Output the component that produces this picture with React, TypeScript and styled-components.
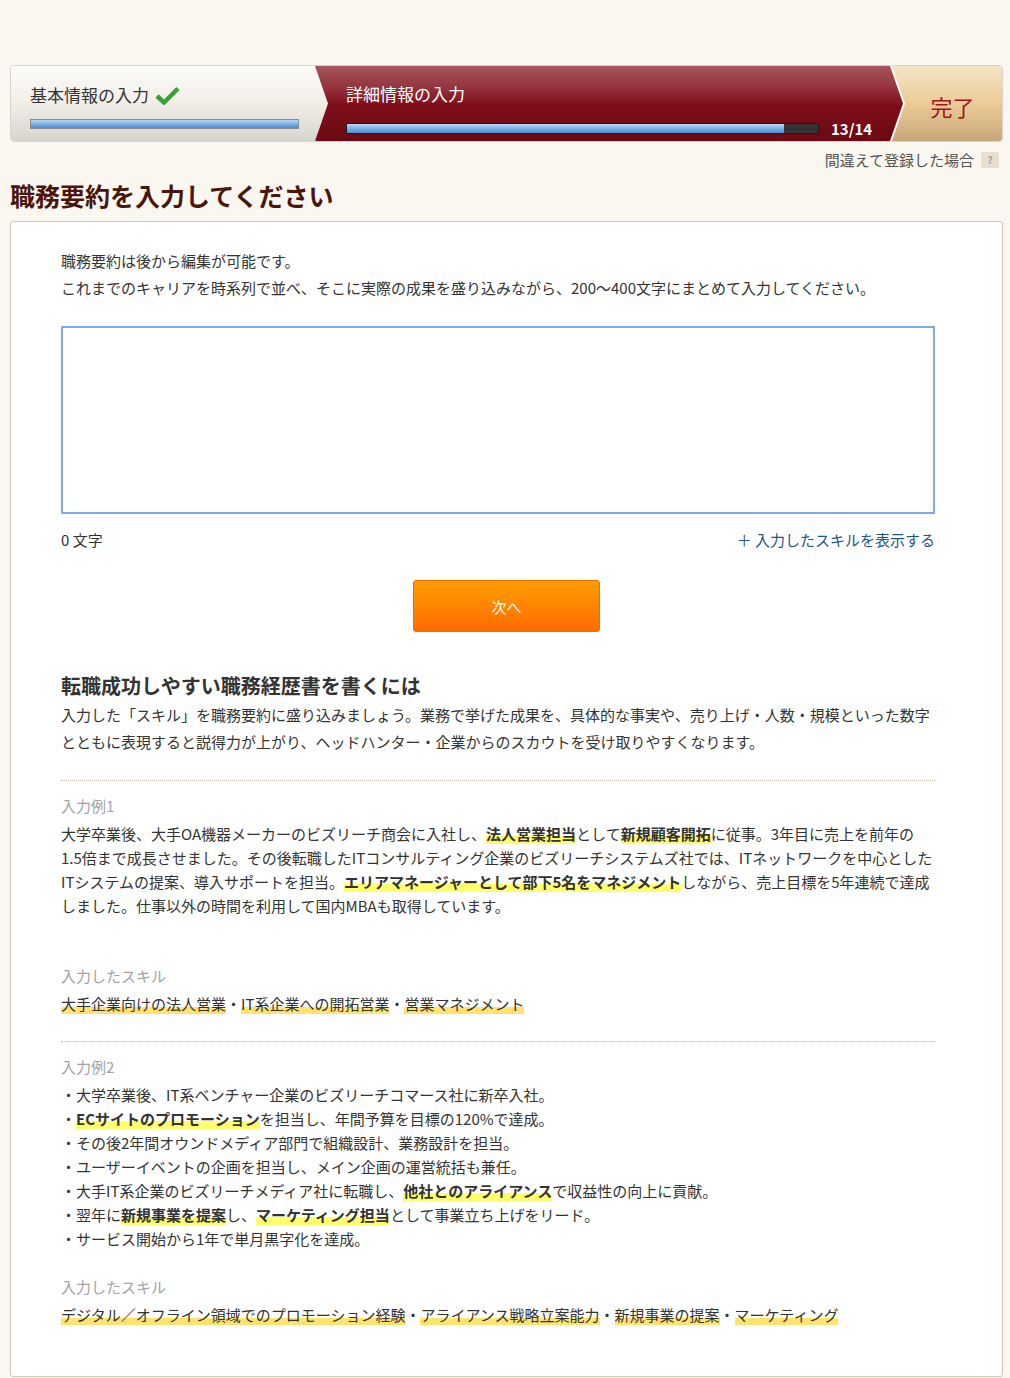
import React from "react";
import styled, { createGlobalStyle } from "styled-components";

const GlobalStyle = createGlobalStyle`
  html, body {
    margin: 0;
    padding: 0;
    background: #faf7f0;
  }
  body {
    font-family: "Noto Sans CJK JP", "Noto Sans", sans-serif;
    color: #333;
  }
  * {
    box-sizing: border-box;
  }
`;

const Page = styled.div`
  width: 993px;
  margin-left: 10px;
  padding-top: 65px;
`;

// ---- stepper ----
const Stepper = styled.div`
  display: flex;
  height: 77px;
  border: 1px solid #d9d3c9;
  border-radius: 4px;
  background: #fff;
  overflow: hidden;
`;

const StepDone = styled.div`
  flex: 0 0 317px;
  display: flex;
  flex-direction: column;
  padding: 17px 0 0 19px;
  background: linear-gradient(#fcfbf8 0%, #f3f0ea 45%, #d8d4ce 100%);
  clip-path: polygon(0 0, calc(100% - 13px) 0, 100% 50%, calc(100% - 13px) 100%, 0 100%);
`;

const StepCurrent = styled.div`
  flex: 0 0 590px;
  margin-left: -15px;
  display: flex;
  flex-direction: column;
  padding: 16px 0 0 33px;
  background: linear-gradient(#a6555d 0%, #93323c 30%, #7e0d19 52%, #6b0a14 100%);
  clip-path: polygon(2px 0, calc(100% - 13px) 0, 100% 50%, calc(100% - 13px) 100%, 2px 100%, 15px 50%);
`;

const StepFinal = styled.div`
  flex: 1;
  margin-left: -13px;
  display: flex;
  align-items: center;
  justify-content: center;
  padding-left: 13px;
  background: linear-gradient(#f5e4c6 0%, #eccb98 50%, #c8a679 100%);
  clip-path: polygon(2px 0, 100% 0, 100% 100%, 2px 100%, 15px 50%);
`;

const StepLabel = styled.div<{ $light?: boolean }>`
  display: flex;
  align-items: center;
  gap: 6px;
  height: 24px;
  font-size: 17px;
  line-height: 24px;
  color: ${(p) => (p.$light ? "#fff" : "#333")};
`;

const FinalLabel = styled.span`
  font-size: 22px;
  color: #a3141a;
  margin-top: 4px;
`;

const BarRow = styled.div`
  display: flex;
  align-items: center;
  margin-top: 12px;
`;

const Bar = styled.div<{ $w: number; $dark?: boolean }>`
  width: ${(p) => p.$w}px;
  height: ${(p) => (p.$dark ? 11 : 10)}px;
  border: 1px solid ${(p) => (p.$dark ? "#1c1c1c" : "#8c8c8c")};
  background: #333;
`;

const Fill = styled.div`
  height: 100%;
  background: linear-gradient(#b7d8f6 0%, #7fb5e8 45%, #4e8dd0 100%);
`;

const Count = styled.span`
  margin-left: 12px;
  font-size: 15px;
  font-weight: 700;
  color: #fff;
`;

// ---- help link + title ----
const HelpRow = styled.div`
  display: flex;
  justify-content: flex-end;
  align-items: center;
  margin-top: 8px;
  padding-right: 4px;
  font-size: 15px;
  line-height: 20px;
  color: #555;
`;

const HelpBadge = styled.span`
  display: inline-flex;
  align-items: center;
  justify-content: center;
  width: 18px;
  height: 16px;
  margin-left: 7px;
  border-radius: 2px;
  background: #e7ded2;
  color: #a9a096;
  font-size: 10px;
  font-weight: 700;
`;

const Title = styled.h1`
  margin: 8px 0 9px;
  font-size: 25px;
  line-height: 34px;
  font-weight: 700;
  color: #4a160c;
`;

// ---- card ----
const Card = styled.section`
  background: #fff;
  border: 1px solid #d6c6b2;
  border-radius: 3px;
  padding: 25px 67px 49px 50px;
`;

const Intro = styled.p`
  margin: 0;
  font-size: 15px;
  line-height: 27px;
`;

const TextBox = styled.textarea`
  display: block;
  width: 100%;
  height: 188px;
  margin-top: 25px;
  padding: 6px 8px;
  border: 2px solid #7ea8e8;
  border-radius: 1px;
  outline: none;
  resize: none;
  font-family: inherit;
  font-size: 15px;
  color: #333;
`;

const MetaRow = styled.div`
  display: flex;
  justify-content: space-between;
  margin-top: 12px;
  font-size: 15px;
  line-height: 27px;
`;

const ToggleLink = styled.a`
  color: #22558d;
  text-decoration: none;
`;

// centred on the whole card, not on the text column
const ButtonRow = styled.div`
  display: flex;
  justify-content: center;
  margin: 27px -67px 0 -50px;
`;

const NextButton = styled.button`
  width: 187px;
  height: 52px;
  border: 1px solid #e77000;
  border-radius: 3px;
  background: linear-gradient(#ff9d00 0%, #ff8500 50%, #ff6b00 100%);
  color: #fff;
  font-family: inherit;
  font-size: 15px;
  cursor: pointer;
`;

const TipsHeading = styled.h2`
  margin: 40px 0 0;
  font-size: 20px;
  line-height: 28px;
  font-weight: 700;
  color: #333;
`;

const TipsText = styled.p`
  margin: 1px 0 0;
  font-size: 15px;
  line-height: 27px;
`;

const Divider = styled.hr`
  margin: 25px 0 0;
  border: none;
  border-top: 1px dotted #cbbdad;
`;

const Label = styled.div<{ $gap: number }>`
  margin-top: ${(p) => p.$gap}px;
  font-size: 15px;
  line-height: 24px;
  color: #a3a3a3;
`;

const Example = styled.p`
  margin: 4px 0 0;
  font-size: 15px;
  line-height: 24px;
`;

const List = styled.ul`
  margin: 4px 0 0;
  padding: 0;
  list-style: none;
  font-size: 15px;
  line-height: 24px;
`;

const Item = styled.li`
  &::before {
    content: "・";
  }
`;

const Mark = styled.strong`
  font-weight: 700;
  background: linear-gradient(transparent 60%, #ffff6b 60%);
`;

const Skills = styled.div`
  margin-top: 4px;
  font-size: 15px;
  line-height: 24px;
`;

const Skill = styled.span`
  background: linear-gradient(transparent 66%, #ffe36e 66%);
`;

const Check = () => (
  <svg width="25" height="19" viewBox="0 0 25 19" aria-hidden>
    <path d="M2 10 L9 16.5 L23 2.5" fill="none" stroke="#37a23b" strokeWidth="4.5" />
  </svg>
);

const skills1 = ["大手企業向けの法人営業", "IT系企業への開拓営業", "営業マネジメント"];
const skills2 = ["デジタル／オフライン領域でのプロモーション経験", "アライアンス戦略立案能力", "新規事業の提案", "マーケティング"];

const SkillLine = ({ items }: { items: string[] }) => (
  <Skills>
    {items.map((s, i) => (
      <React.Fragment key={s}>
        {i > 0 && "・"}
        <Skill>{s}</Skill>
      </React.Fragment>
    ))}
  </Skills>
);

export default function App() {
  const done = 13;
  const total = 14;
  const barWidth = 473;

  return (
    <>
      <GlobalStyle />
      <Page>
        <Stepper>
          <StepDone>
            <StepLabel>
              基本情報の入力
              <Check />
            </StepLabel>
            <BarRow>
              <Bar $w={269}>
                <Fill style={{ width: "100%" }} />
              </Bar>
            </BarRow>
          </StepDone>
          <StepCurrent>
            <StepLabel $light>詳細情報の入力</StepLabel>
            <BarRow>
              <Bar $w={barWidth} $dark>
                <Fill style={{ width: `${(done / total) * 100}%` }} />
              </Bar>
              <Count>
                {done}/{total}
              </Count>
            </BarRow>
          </StepCurrent>
          <StepFinal>
            <FinalLabel>完了</FinalLabel>
          </StepFinal>
        </Stepper>

        <HelpRow>
          間違えて登録した場合
          <HelpBadge>?</HelpBadge>
        </HelpRow>

        <Title>職務要約を入力してください</Title>

        <Card>
          <Intro>
            職務要約は後から編集が可能です。
            <br />
            これまでのキャリアを時系列で並べ、そこに実際の成果を盛り込みながら、200〜400文字にまとめて入力してください。
          </Intro>

          <TextBox autoFocus />

          <MetaRow>
            <span>0 文字</span>
            <ToggleLink href="#">＋ 入力したスキルを表示する</ToggleLink>
          </MetaRow>

          <ButtonRow>
            <NextButton type="button">次へ</NextButton>
          </ButtonRow>

          <TipsHeading>転職成功しやすい職務経歴書を書くには</TipsHeading>
          <TipsText>
            入力した「スキル」を職務要約に盛り込みましょう。業務で挙げた成果を、具体的な事実や、売り上げ・人数・規模といった数字とともに表現すると説得力が上がり、ヘッドハンター・企業からのスカウトを受け取りやすくなります。
          </TipsText>

          <Divider />

          <Label $gap={13}>入力例1</Label>
          <Example>
            大学卒業後、大手OA機器メーカーのビズリーチ商会に入社し、<Mark>法人営業担当</Mark>として
            <Mark>新規顧客開拓</Mark>に従事。3年目に売上を前年の
            <br />
            1.5倍まで成長させました。その後転職したITコンサルティング企業のビズリーチシステムズ社では、ITネットワークを中心とした
            <br />
            ITシステムの提案、導入サポートを担当。<Mark>エリアマネージャーとして部下5名をマネジメント</Mark>
            しながら、売上目標を5年連続で達成
            <br />
            しました。仕事以外の時間を利用して国内MBAも取得しています。
          </Example>

          <Label $gap={46}>入力したスキル</Label>
          <SkillLine items={skills1} />

          <Divider />

          <Label $gap={13}>入力例2</Label>
          <List>
            <Item>大学卒業後、IT系ベンチャー企業のビズリーチコマース社に新卒入社。</Item>
            <Item>
              <Mark>ECサイトのプロモーション</Mark>を担当し、年間予算を目標の120%で達成。
            </Item>
            <Item>その後2年間オウンドメディア部門で組織設計、業務設計を担当。</Item>
            <Item>ユーザーイベントの企画を担当し、メイン企画の運営統括も兼任。</Item>
            <Item>
              大手IT系企業のビズリーチメディア社に転職し、<Mark>他社とのアライアンス</Mark>で収益性の向上に貢献。
            </Item>
            <Item>
              翌年に<Mark>新規事業を提案</Mark>し、<Mark>マーケティング担当</Mark>として事業立ち上げをリード。
            </Item>
            <Item>サービス開始から1年で単月黒字化を達成。</Item>
          </List>

          <Label $gap={24}>入力したスキル</Label>
          <SkillLine items={skills2} />
        </Card>
      </Page>
    </>
  );
}
